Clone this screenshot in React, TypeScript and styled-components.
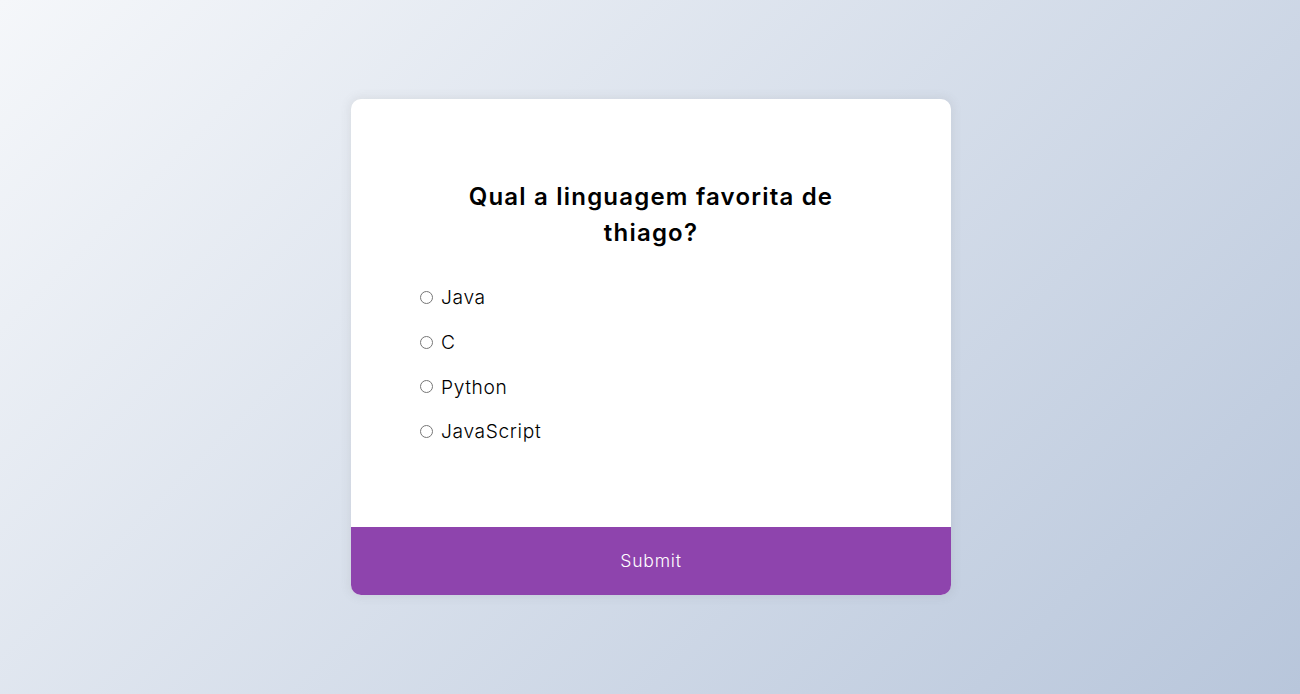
import { FC } from "react";
import styled, { createGlobalStyle } from "styled-components";

const options = ["Java", "C", "Python", "JavaScript"];

const GlobalStyle = createGlobalStyle`
  * {
    box-sizing: border-box;
  }
  body {
    margin: 0;
    font-family: Inter, "Noto Sans", sans-serif;
    letter-spacing: 0.04em;
    background-color: #b8c6db;
    background-image: linear-gradient(315deg, #b8c6db 0%, #f5f7fa 100%);
    min-height: 100vh;
  }
`;

const App: FC = () => {
  return (
    <>
      <GlobalStyle />
      <StyledPage>
        <StyledQuiz>
          <StyledHeader>
            <StyledQuestion>Qual a linguagem favorita de thiago?</StyledQuestion>
            <StyledList>
              {options.map((opt, i) => (
                <StyledOption key={opt}>
                  <StyledRadio type="radio" name="answer" id={`opt-${i}`} />
                  <StyledLabel htmlFor={`opt-${i}`}>{opt}</StyledLabel>
                </StyledOption>
              ))}
            </StyledList>
          </StyledHeader>
          <StyledSubmit>Submit</StyledSubmit>
        </StyledQuiz>
      </StyledPage>
    </>
  );
};

const StyledPage = styled.div`
  display: flex;
  align-items: center;
  justify-content: center;
  height: 100vh;
  padding-left: 2px;
`;

const StyledQuiz = styled.div`
  background-color: #fff;
  border-radius: 10px;
  box-shadow: 0 0 10px 2px rgba(100, 100, 100, 0.1);
  width: 600px;
  overflow: hidden;
`;

const StyledHeader = styled.div`
  padding: 64px 64px 65px;
`;

const StyledQuestion = styled.h2`
  margin: 0;
  padding: 16px;
  text-align: center;
  font-size: 24px;
  font-weight: 600;
  line-height: 36px;
  letter-spacing: 0.05em;
  color: #000;
`;

const StyledList = styled.ul`
  list-style-type: none;
  padding: 0;
  margin: 13px 0 0;
`;

const StyledOption = styled.li`
  font-size: 19.2px;
  line-height: 28.8px;
  font-weight: 300;
  margin: 16px 0;
  display: flex;
  align-items: center;
`;

const StyledRadio = styled.input`
  width: 13px;
  height: 13px;
  margin: 0 8px 0 5px;
`;

const StyledLabel = styled.label`
  cursor: pointer;
  color: #000;
`;

const StyledSubmit = styled.button`
  display: block;
  width: 100%;
  background-color: #8e44ad;
  color: #fff;
  border: none;
  cursor: pointer;
  font-family: inherit;
  letter-spacing: 0.045em;
  font-size: 17.6px;
  font-weight: 300;
  line-height: 26.4px;
  padding: 20.8px;
`;

export default App;
